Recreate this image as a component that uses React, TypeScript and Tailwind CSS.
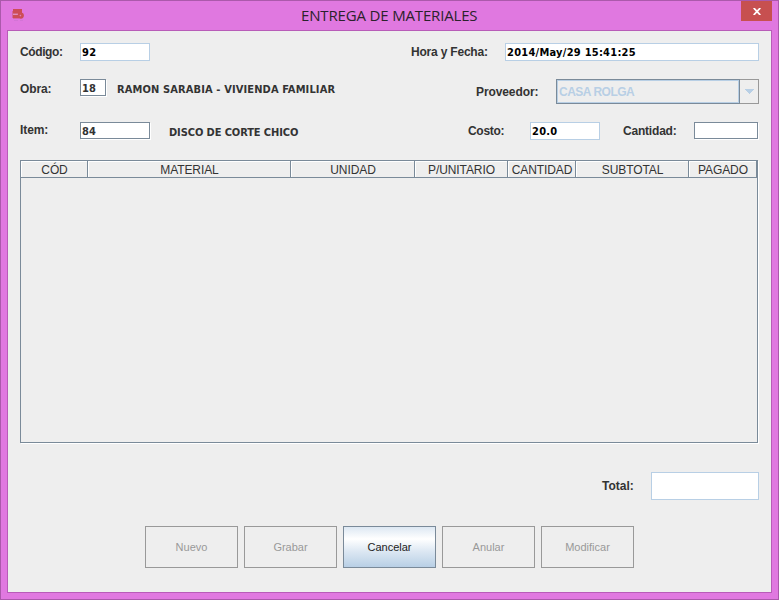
import type { ReactNode } from "react";

const SANS = "font-['Liberation_Sans',Arial,sans-serif]";
const TAHOMA = "font-['DejaVu_Sans_Condensed','DejaVu_Sans',sans-serif] [font-stretch:condensed]";

function Label({ className, children }: { className: string; children: ReactNode }) {
  return (
    <span className={`${SANS} block shrink-0 whitespace-nowrap text-[12px] font-bold leading-[18px] text-[#333333] ${className}`}>
      {children}
    </span>
  );
}

function Name({ className, children }: { className: string; children: ReactNode }) {
  return (
    <span className={`${TAHOMA} block shrink-0 whitespace-nowrap text-[11px] font-bold leading-[18px] text-[#333333] ${className}`}>
      {children}
    </span>
  );
}

function ReadField({ className, children }: { className: string; children?: ReactNode }) {
  return (
    <div className={`${TAHOMA} shrink-0 whitespace-nowrap border border-[#b8cfe5] bg-white pl-px text-[11px] font-bold leading-[17px] tracking-[0.25px] text-black ${className}`}>
      {children}
    </div>
  );
}

function EditField({ className, children }: { className: string; children?: ReactNode }) {
  return (
    <div className={`${TAHOMA} shrink-0 whitespace-nowrap border border-[#7a8a99] bg-white pl-px text-[11px] font-bold leading-[17px] tracking-[0.2px] text-[#333333] shadow-[1px_1px_0_white] ${className}`}>
      {children}
    </div>
  );
}

const columns = [
  { title: "CÓD", size: "w-[67px]" },
  { title: "MATERIAL", size: "w-[203px]" },
  { title: "UNIDAD", size: "w-[124px]" },
  { title: "P/UNITARIO", size: "w-[93px]" },
  { title: "CANTIDAD", size: "w-[68px]" },
  { title: "SUBTOTAL", size: "w-[113px]" },
  { title: "PAGADO", size: "w-[68px]" },
];

const buttons = [
  { text: "Nuevo", active: false },
  { text: "Grabar", active: false },
  { text: "Cancelar", active: true },
  { text: "Anular", active: false },
  { text: "Modificar", active: false },
];

export default function App() {
  return (
    <div className="flex h-[600px] w-[779px] flex-col overflow-hidden border border-[#ab59ab] bg-[#e078e0]">
      <header className="flex h-[29px] shrink-0">
        <svg className="ml-[11px] mt-2 h-3.5 w-[13px]" viewBox="0 0 13 14">
          <rect x="0" y="2" width="1" height="7" fill="#d565a0" />
          <rect x="1" y="0" width="9" height="5" fill="#cd4d57" />
          <rect x="1" y="4.6" width="5" height="1.6" fill="#df8fc0" />
          <rect x="1" y="6" width="6" height="3.4" fill="#cd4d57" />
          <circle cx="8.8" cy="6.6" r="3.1" fill="#cd4d57" />
          <circle cx="8.4" cy="6.6" r="0.8" fill="#db80bb" />
          <path d="M2 11h4v1H2zM8 11h3v1H8z" fill="#d374d6" />
        </svg>
        <h1 className="ml-[276px] w-[180px] whitespace-nowrap font-['Open_Sans',sans-serif] text-[15px] leading-[28px] tracking-[-0.16px] text-[#2b222b]">
          ENTREGA DE MATERIALES
        </h1>
        <button className="ml-auto mr-1.5 flex h-5 w-[31px] items-center justify-center bg-[#c75050]" aria-label="Cerrar">
          <svg className="mt-px h-[7px] w-2" viewBox="0 0 8 7">
            <path d="M.7 0 7.3 7M7.3 0 .7 7" stroke="#fff" strokeWidth="1.8" />
          </svg>
        </button>
      </header>

      <main className="mx-1.5 mb-1.5 flex-1 border border-[#b85cb8] bg-[#eeeeee] pl-3 pt-3">
        <div className="flex h-[18px]">
          <Label className="w-[60px] tracking-[-0.4px]">Código:</Label>
          <ReadField className="h-[18px] w-[70px]">92</ReadField>
          <Label className="ml-[261px] w-[94px] tracking-[-0.2px]">Hora y Fecha:</Label>
          <ReadField className="h-[18px] w-[254px]">2014/May/29 15:41:25</ReadField>
        </div>

        <div className="mt-[18px] flex h-[25px]">
          <Label className="mt-px w-[60px] tracking-[-0.1px]">Obra:</Label>
          <EditField className="h-[17px] w-[26px]">18</EditField>
          <Name className="ml-[11px] mt-0.5 w-[359px] tracking-[0.12px]">RAMON SARABIA - VIVIENDA FAMILIAR</Name>
          <Label className="mt-1 w-[80px] tracking-[-0.1px]">Proveedor:</Label>
          <div className="flex h-[25px] w-[203px] shrink-0">
            <div className={`${SANS} w-[184px] border border-[#7a8a99] text-[12px] font-bold tracking-[-0.5px] text-[#b8cfe5]`}>
              <div className="h-[23px] border border-[#b8cfe5] pl-px leading-[22px]">CASA ROLGA</div>
            </div>
            <div className="flex w-[19px] items-center justify-center border border-l-0 border-[#999999]">
              <svg className="h-[5px] w-2.5" viewBox="0 0 10 5" shapeRendering="crispEdges">
                <path d="M0 0h10L5 5z" fill="#b8cfe5" />
              </svg>
            </div>
          </div>
        </div>

        <div className="mt-[18px] flex h-[18px]">
          <Label className="-mt-px w-[60px] tracking-[-0.1px]">Item:</Label>
          <EditField className="h-[17px] w-[70px]">84</EditField>
          <Name className="ml-[19px] mt-0.5 w-[299px] tracking-[-0.1px]">DISCO DE CORTE CHICO</Name>
          <Label className="w-[62px] tracking-[-0.3px]">Costo:</Label>
          <ReadField className="h-[18px] w-[70px]">20.0</ReadField>
          <Label className="ml-[23px] w-[71px] tracking-[-0.2px]">Cantidad:</Label>
          <EditField className="h-[17px] w-16" />
        </div>

        <section className="mt-5 h-[283px] w-[738px] border border-[#7a8a99] shadow-[1px_1px_0_white]">
          <div className="flex h-[17px]">
            {columns.map((c) => (
              <div
                key={c.title}
                className={`${c.size} ${SANS} shrink-0 whitespace-nowrap border-b border-r border-[#7a8a99] pl-px pt-px text-center text-[12px] leading-[16px] tracking-[-0.1px] text-[#333333] shadow-[inset_1px_1px_0_white]`}
              >
                {c.title}
              </div>
            ))}
          </div>
        </section>

        <div className="mt-[29px] flex h-7">
          <Label className="ml-[582px] mt-[5px] w-[49px]">Total:</Label>
          <ReadField className="h-7 w-[108px]" />
        </div>

        <div className="ml-[125px] mt-[26px] flex gap-1.5">
          {buttons.map((b) => (
            <button
              key={b.text}
              className={`${SANS} h-[42px] w-[93px] border text-[11px] ${
                b.active
                  ? "border-[#7a8a99] bg-[linear-gradient(to_bottom,#dde8f3_0%,#ffffff_30%,#dde8f3_60%,#b8cfe5_100%)] text-[#222222]"
                  : "border-[#999999] text-[#999999]"
              }`}
            >
              {b.text}
            </button>
          ))}
        </div>
      </main>
    </div>
  );
}
